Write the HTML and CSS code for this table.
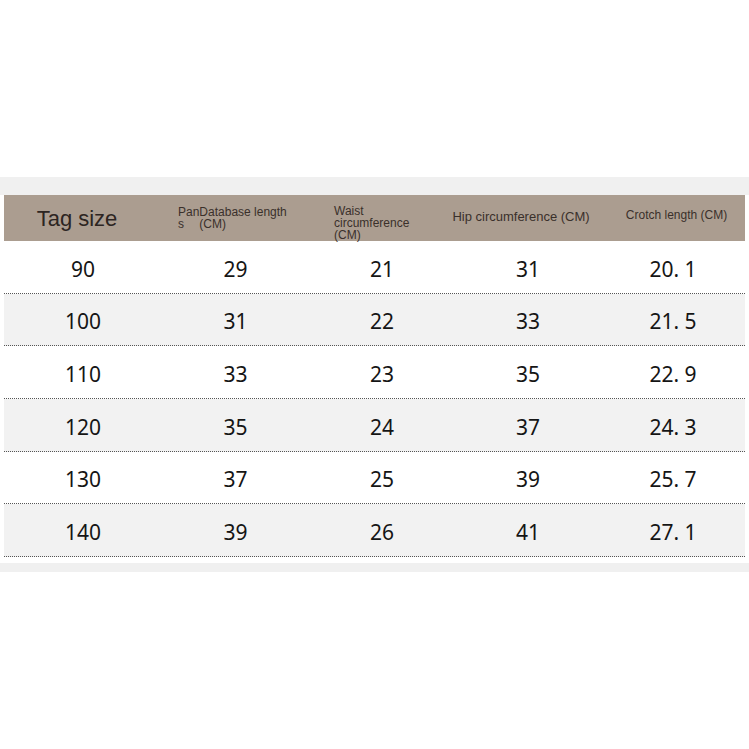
FILE: index.html
```html
<!DOCTYPE html>
<html>
<head>
<meta charset="utf-8">
<link rel="stylesheet" href="styles.css">
</head>
<body>
<div class="page">
  <div class="band"></div>
  <div class="table">
    <div class="row head">
      <div class="cell tag">Tag size</div>
      <div class="cell h h2"><span class="pans">Pan<br>s</span><span>Database length<br>(CM)</span></div>
      <div class="cell h h3">Waist<br>circumference<br>(CM)</div>
      <div class="cell h h4">Hip circumference (CM)</div>
      <div class="cell h h5">Crotch length (CM)</div>
    </div>
    <div class="row"><div class="cell">90</div><div class="cell">29</div><div class="cell">21</div><div class="cell">31</div><div class="cell">20. 1</div></div>
    <div class="row alt"><div class="cell">100</div><div class="cell">31</div><div class="cell">22</div><div class="cell">33</div><div class="cell">21. 5</div></div>
    <div class="row"><div class="cell">110</div><div class="cell">33</div><div class="cell">23</div><div class="cell">35</div><div class="cell">22. 9</div></div>
    <div class="row alt"><div class="cell">120</div><div class="cell">35</div><div class="cell">24</div><div class="cell">37</div><div class="cell">24. 3</div></div>
    <div class="row"><div class="cell">130</div><div class="cell">37</div><div class="cell">25</div><div class="cell">39</div><div class="cell">25. 7</div></div>
    <div class="row alt"><div class="cell">140</div><div class="cell">39</div><div class="cell">26</div><div class="cell">41</div><div class="cell">27. 1</div></div>
  </div>
  <div class="gap"></div>
  <div class="band bottom"></div>
</div>
</body>
</html>
```

FILE: styles.css
```css
html, body {
  margin: 0;
  padding: 0;
  background: #ffffff;
}
.page {
  padding-top: 177px;
  width: 749px;
}
.band {
  height: 18px;
  background: #f0f0f0;
}
.band.bottom {
  height: 9px;
}
.gap {
  height: 6px;
}
.table {
  margin: 0 4px;
}
.row {
  display: grid;
  grid-template-columns: 158px 147px 146px 146px 144px;
  height: 51.67px;
  border-bottom: 1px dotted #555;
  align-items: center;
  font-family: "Noto Sans", "Liberation Sans", sans-serif;
  font-size: 21px;
  color: #151515;
}
.row .cell {
  text-align: center;
  padding-top: 4px;
}
.row.alt {
  background: #f2f2f2;
}
.row.head {
  height: 46px;
  border-bottom: none;
  background: #ab9d90;
  font-family: "Liberation Sans", Arial, sans-serif;
  color: #2d2522;
}
.row .cell.tag {
  font-size: 22px;
  padding-right: 12px;
  padding-top: 1px;
}
.row .cell.h {
  font-size: 12px;
  line-height: 12px;
  text-align: left;
  color: #3a302b;
  padding-top: 0;
}
.row .cell.h2 {
  display: flex;
  padding-left: 16px;
  margin-top: -1px;
}
.row .cell.h3 {
  padding-left: 25px;
  margin-top: 10px;
}
.row .cell.h4 {
  text-align: center;
  font-size: 13px;
  margin-top: -3px;
  margin-left: -14px;
  white-space: nowrap;
}
.row .cell.h5 {
  text-align: center;
  font-size: 12px;
  margin-top: -6px;
  padding-left: 7px;
  white-space: nowrap;
}
```
